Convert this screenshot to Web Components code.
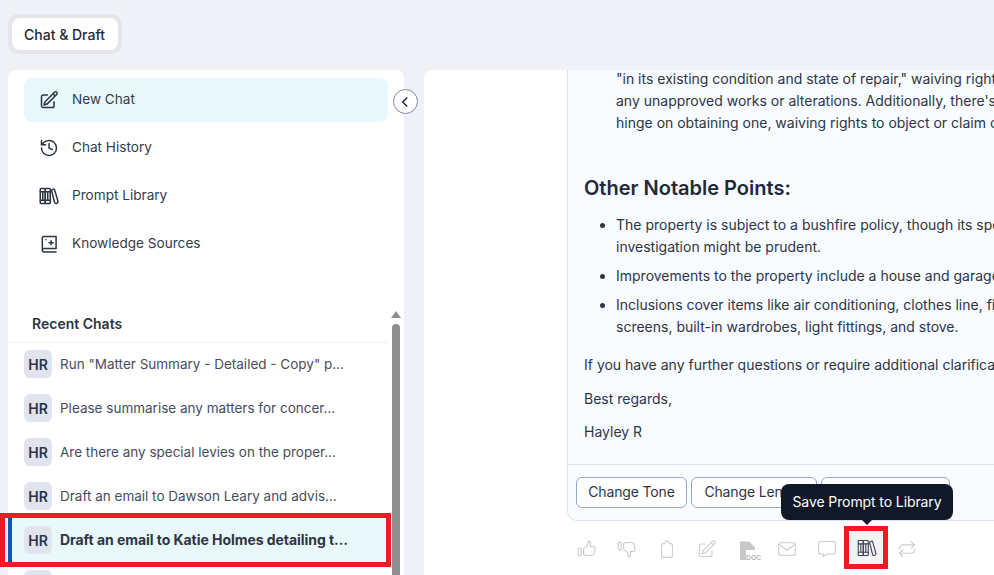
<!DOCTYPE html>
<html lang="en">
<head>
<meta charset="utf-8">
<title>Chat &amp; Draft</title>
<style>
  html, body { margin: 0; height: 100%; overflow: hidden; background: #eff1f6; }
  body { font-family: Inter, "Noto Sans", sans-serif; color: #1f2937; }
</style>
</head>
<body>
<app-shell>
  <side-bar slot="side">
    <nav-item icon="compose" active>New Chat</nav-item>
    <nav-item icon="history">Chat History</nav-item>
    <nav-item icon="books">Prompt Library</nav-item>
    <nav-item icon="knowledge">Knowledge Sources</nav-item>
    <chat-row slot="chats">Run "Matter Summary - Detailed - Copy" p…</chat-row>
    <chat-row slot="chats">Please summarise any matters for concer…</chat-row>
    <chat-row slot="chats">Are there any special levies on the proper…</chat-row>
    <chat-row slot="chats">Draft an email to Dawson Leary and advis…</chat-row>
    <chat-row slot="chats" selected>Draft an email to Katie Holmes detailing t…</chat-row>
    <chat-row slot="chats" blank></chat-row>
  </side-bar>
  <chat-panel slot="main">
    <ul class="cont">
      <li>"in its existing condition and state of repair," waiving rights<br>any unapproved works or alterations. Additionally, there's<br>hinge on obtaining one, waiving rights to object or claim on</li>
    </ul>
    <h3>Other Notable Points:</h3>
    <ul>
      <li>The property is subject to a bushfire policy, though its specifics<br>investigation might be prudent.</li>
      <li>Improvements to the property include a house and garage</li>
      <li>Inclusions cover items like air conditioning, clothes line, fire<br>screens, built-in wardrobes, light fittings, and stove.</li>
    </ul>
    <p class="a">If you have any further questions or require additional clarification</p>
    <p class="b">Best regards,</p>
    <p class="c">Hayley R</p>
  </chat-panel>
</app-shell>

<script>
const ICONS = {
  compose: '<path d="M16.862 4.487l1.687-1.688a1.875 1.875 0 112.652 2.652L10.582 16.07a4.5 4.5 0 01-1.897 1.13L6 18l.8-2.685a4.5 4.5 0 011.13-1.897l8.932-8.931zm0 0L19.5 7.125M18 14v4.75A2.25 2.25 0 0115.75 21H5.25A2.25 2.25 0 013 18.75V8.25A2.25 2.25 0 015.25 6H10"/>',
  history: '<path d="M3 12a9 9 0 1 0 9-9 9.75 9.75 0 0 0-6.74 2.74L3 8"/><path d="M3 3v5h5"/><path d="M12 7v5l4 2"/>',
  books: '<path d="M1.500 4a1 1 0 0 1 1-1h4a1 1 0 0 1 1 1v17h-5a1 1 0 0 1-1-1z"/><path d="M7.500 4a1 1 0 0 1 1-1h4a1 1 0 0 1 1 1v16a1 1 0 0 1-1 1h-5z"/><path d="M4.500 7v10M10.500 7v10M1.500 7h12M1.500 17h12"/><path d="M15 5l2.300-1.200a1 1 0 0 1 1.400.500l4 14a2 2 0 0 1-1.300 2.500l-.4.100a2 2 0 0 1-2.400-1.400L15 5z"/>',
  knowledge: '<path d="M4 19V4.500a1.500 1.500 0 0 1 1.500-1.500H20.500v14.500H6a2 2 0 0 0-2 1.500 2 2 0 0 0 2 2.500h14.500"/><path d="M14.500 8v5M12 10.500h5"/><path d="M8.500 7h.01"/>',
  thumb: '<rect x="1.500" y="11" width="3.500" height="9" rx=".8"/><path d="M8 11.500c2-1 4-3 5-5 .6-1.200.6-2.500.8-4 1.700 0 2.800 1.400 2.600 3l-.5 3.500h3.400a2.500 2.500 0 0 1 2.400 3.200l-1.400 5.300a3 3 0 0 1-2.900 2.300h-6.200c-1.200 0-2-.4-3.200-1.200z"/>',
  clip: '<path d="M9 5.500H7.500a2 2 0 0 0-2 2V20a2 2 0 0 0 2 2h9a2 2 0 0 0 2-2V7.500a2 2 0 0 0-2-2H15"/><path d="M9 5.500l1.200-3h3.600l1.200 3"/>',
  mail: '<rect x="2" y="4.500" width="20" height="15" rx="2"/><path d="M2.500 6.500l9.500 7 9.500-7"/>',
  bubble: '<path d="M4 3h16a2 2 0 0 1 2 2v11a2 2 0 0 1-2 2h-8.500L7.500 21.500V18H4a2 2 0 0 1-2-2V5a2 2 0 0 1 2-2z"/>',
  repeat: '<path d="M17 3l4 4-4 4"/><path d="M3 12v-1a4 4 0 0 1 4-4h14"/><path d="M7 21l-4-4 4-4"/><path d="M21 12v1a4 4 0 0 1-4 4H3"/>',
  chevron: '<path d="M15 5l-7 7 7 7"/>'
};

function svg(name, size, width) {
  return `<svg width="${size}" height="${size}" viewBox="0 0 24 24" fill="none" stroke="currentColor" stroke-width="${width}" stroke-linecap="round" stroke-linejoin="round">${ICONS[name]}</svg>`;
}

class AppShell extends HTMLElement {
  constructor() {
    super();
    this.attachShadow({ mode: "open" });
    this.shadowRoot.innerHTML = `<style>
      :host { display: flex; flex-direction: column; height: 100vh; box-sizing: border-box; padding: 14px 0 0 8px; gap: 16px; overflow: hidden; }
      .tabs { align-self: flex-start; padding: 4px; background: #e4e6ec; border-radius: 10px; }
      .tab { display: flex; align-items: center; height: 32px; padding: 0 13px 0 12px; background: #fff; border-radius: 8px; font-size: 14px; font-weight: 500; color: #1f2937; }
      .body { flex: 1; min-height: 0; display: flex; gap: 20px; }
    </style>
    <div class="tabs"><div class="tab">Chat &amp; Draft</div></div>
    <div class="body"><slot name="side"></slot><slot name="main"></slot></div>`;
  }
}

class SideBar extends HTMLElement {
  constructor() {
    super();
    this.attachShadow({ mode: "open" });
    this.shadowRoot.innerHTML = `<style>
      :host { display: flex; flex-direction: column; position: relative; width: 396px; flex: none; background: #fff; border-radius: 8px 8px 0 0; }
      nav { display: flex; flex-direction: column; padding: 8px 16px 0; height: 228px; box-sizing: border-box; }
      .collapse { position: absolute; left: 384.500px; top: 19px; width: 25px; height: 25px; box-sizing: border-box; display: flex; align-items: center; justify-content: center; background: #fff; border: 1px solid #7f89a8; border-radius: 50%; color: #1f2937; }
      .recent { flex: 1; min-height: 0; display: flex; }
      .list { width: 380px; flex: none; }
      h2 { margin: 0; height: 45px; box-sizing: border-box; padding: 17px 0 0 24px; line-height: 18px; font-size: 14px; font-weight: 600; color: #2d3545; border-bottom: 1px solid #eef0f4; }
      .rows { display: flex; flex-direction: column; margin-top: -1px; }
      .bar { width: 16px; flex: none; display: flex; flex-direction: column; align-items: center; box-sizing: border-box; }
      .up { width: 0; height: 0; margin-top: 13px; border: 5px solid transparent; border-top: 0; border-bottom: 7px solid #8f8f8f; }
      .thumb { flex: 1; width: 8px; margin-top: 6px; background: #8f8f8f; border-radius: 4px 4px 0 0; }
    </style>
    <nav><slot></slot></nav>
    <div class="collapse">${svg("chevron", 14, 2.6)}</div>
    <div class="recent">
      <div class="list"><h2>Recent Chats</h2><div class="rows"><slot name="chats"></slot></div></div>
      <div class="bar"><div class="up"></div><div class="thumb"></div></div>
    </div>`;
  }
}

class NavItem extends HTMLElement {
  connectedCallback() {
    if (this.shadowRoot) return;
    this.attachShadow({ mode: "open" });
    this.shadowRoot.innerHTML = `<style>
      :host { display: flex; align-items: center; height: 44px; flex: none; margin-bottom: 4px; padding-left: 15px; gap: 13px; border-radius: 8px; font-size: 13.600px; color: #343c4e; }
      :host([active]) { background: #e9f9fb; }
      .i { display: flex; width: 20px; height: 20px; flex: none; color: #2d3545; }
      .l { padding-bottom: 2px; }
    </style>
    <span class="i">${svg(this.getAttribute("icon"), 20, 1.8)}</span><span class="l"><slot></slot></span>`;
  }
}

class ChatRow extends HTMLElement {
  connectedCallback() {
    if (this.shadowRoot) return;
    this.attachShadow({ mode: "open" });
    const selected = this.hasAttribute("selected");
    const blank = this.hasAttribute("blank");
    this.shadowRoot.innerHTML = `<style>
      :host { display: flex; position: relative; align-items: center; height: 44px; flex: none; padding-left: 16px; gap: 8px; font-size: 13.500px; color: #464d5e; white-space: nowrap; }
      :host([selected]) { width: 378px; box-sizing: border-box; background: #e9f9fb; font-size: 14px; font-weight: 700; letter-spacing: -.05px; color: #2d3545; }
      .av { width: 28px; height: 28px; flex: none; display: flex; align-items: center; justify-content: center; background: #e0e4ee; border-radius: 6px; font-size: 14px; font-weight: 600; letter-spacing: 0; color: #2d3545; }
      .t { padding-bottom: 1px; }
      .stripe { position: absolute; left: 0; top: 0; bottom: 0; width: 4px; background: #0f57b5; }
      .mark { position: absolute; left: -8px; right: -5px; top: -5px; bottom: -5px; border: 5px solid #ed1c24; pointer-events: none; }
    </style>
    ${selected ? '<span class="stripe"></span><span class="mark"></span>' : ""}
    <span class="av">${blank ? "" : "HR"}</span><span class="t"><slot></slot></span>`;
  }
}

class ChatPanel extends HTMLElement {
  constructor() {
    super();
    this.attachShadow({ mode: "open" });
    this.shadowRoot.innerHTML = `<style>
      :host { display: flex; flex: 1; min-width: 0; height: 100%; padding-left: 143px; box-sizing: border-box; background: #fff; border-radius: 8px 0 0 0; overflow: hidden; }
      .col { width: 700px; flex: none; display: flex; flex-direction: column; }
      .card { flex: none; height: 451px; box-sizing: border-box; display: flex; flex-direction: column; background: #f8fbff; border: solid #dbe3f3; border-width: 0 0 1px 1px; border-radius: 0 0 0 10px; }
      .scroll { flex: 1; min-height: 0; overflow: hidden; padding: 0 16px; border-bottom: 1px solid #dbe3f3; }
      .foot { flex: none; display: flex; gap: 4px; padding: 12px 8px; }
      .foot button { height: 31px; padding: 0 0 2px; border: 1px solid #9aa8c7; border-radius: 6px; background: #fff; font: 400 14px Inter, sans-serif; letter-spacing: -.15px; color: #2d3545; }
      ::slotted(*) { font-size: 14px; line-height: 22px; color: #2d3545; }
      ::slotted(ul) { margin: 0; padding-left: 32px; white-space: nowrap; }
      ::slotted(ul.cont) { margin-top: -2px; list-style: none; }
      ::slotted(h3) { margin: 40px 0 12px; font-size: 20px; line-height: 28px; font-weight: 600; color: #1f2937; }
      ::slotted(p) { margin: 0; white-space: nowrap; }
      ::slotted(p.a) { margin-top: 16px; }
      ::slotted(p.b) { margin-top: 12px; }
      ::slotted(p.c) { margin-top: 11px; }
      .t { width: 111px; } .l { width: 126px; } .f { width: 129px; }
    </style>
    <div class="col">
      <div class="card">
        <div class="scroll"><slot></slot></div>
        <div class="foot"><button class="t">Change Tone</button><button class="l">Change Length</button><button class="f"></button></div>
      </div>
      <action-bar></action-bar>
    </div>`;
  }
  connectedCallback() {
    // li is light DOM two levels down, ::slotted can't reach it
    this.querySelectorAll("ul:not(.cont) li").forEach((li) => { li.style.marginBottom = "7px"; });
  }
}

class ActionBar extends HTMLElement {
  constructor() {
    super();
    this.attachShadow({ mode: "open" });
    const ic = (n, extra) => `<button class="${extra || ""}">${svg(n, 20, 1.3)}</button>`;
    this.shadowRoot.innerHTML = `<style>
      :host { display: flex; gap: 4px; padding: 10px 0 0 2px; }
      button { position: relative; display: flex; align-items: center; justify-content: center; width: 36px; height: 36px; padding: 0; border: 0; background: none; color: #cbcbcb; }
      svg { overflow: visible; }
      .flip svg { transform: scaleY(-1); }
      .on { color: #3a4052; background: #f3f3f3; height: 33px; padding-top: 1px; box-sizing: border-box; }
      .mark { position: absolute; left: -5px; right: -3px; top: -5px; bottom: -5px; border: 5px solid #ed1c24; }
      .tip { position: absolute; left: 50%; transform: translateX(-50%); bottom: calc(100% + 11px); width: 172px; height: 36px; display: flex; align-items: center; justify-content: center; background: #111827; color: #fff; border-radius: 8px; font: 400 14px Inter, sans-serif; letter-spacing: -.1px; white-space: nowrap; padding-bottom: 2px; box-sizing: border-box; }
      .tip::after { content: ""; position: absolute; left: 50%; top: 100%; margin-left: -5px; border: 5px solid transparent; border-bottom: 0; border-top-color: #111827; }
      .doc { font: 700 6.800px "Liberation Sans", sans-serif; fill: #b4b4b4; }
    </style>
    ${ic("thumb")}${ic("thumb", "flip")}${ic("clip")}${ic("compose")}
    <button><svg width="24" height="24" viewBox="0 0 24 24"><path fill="#c9c9c9" d="M6 4.500h8l6 6v2.500h-9v10H6a1 1 0 0 1-1-1V5.500a1 1 0 0 1 1-1z"/><text class="doc" x="11" y="23">DOC</text></svg></button>
    ${ic("mail")}${ic("bubble")}
    <button class="on">${svg("books", 20, 1.3)}<span class="mark"></span><span class="tip">Save Prompt to Library</span></button>
    ${ic("repeat")}`;
  }
}

customElements.define("app-shell", AppShell);
customElements.define("side-bar", SideBar);
customElements.define("nav-item", NavItem);
customElements.define("chat-row", ChatRow);
customElements.define("chat-panel", ChatPanel);
customElements.define("action-bar", ActionBar);
</script>
</body>
</html>
